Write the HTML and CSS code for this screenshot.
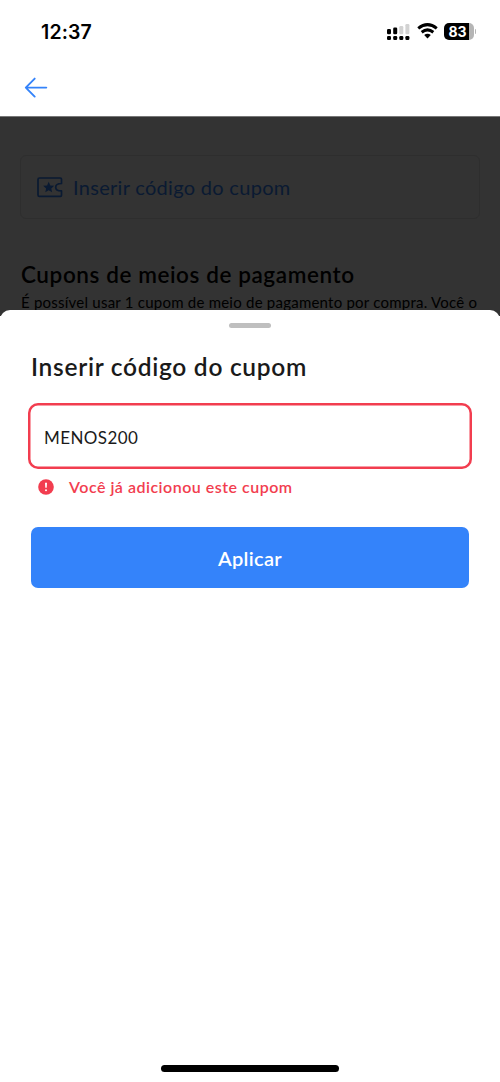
FILE: index.html
```html
<!DOCTYPE html>
<html lang="pt-BR">
<head>
<meta charset="utf-8">
<meta name="viewport" content="width=device-width, initial-scale=1">
<title>Inserir código do cupom</title>
<link rel="stylesheet" href="styles.css">
</head>
<body>
<div class="screen">
  <div class="status-bar">
    <span class="time">12:37</span>
    <div class="status-icons">
      <svg class="signal" viewBox="0 0 23 16">
        <g fill="#000"><rect x="0" y="5" width="4" height="5.2" rx="1.2"/><rect x="6.2" y="3.5" width="4" height="6.7" rx="1.2"/>
        <rect x="0" y="12" width="4" height="4" rx="1.2"/><rect x="6.2" y="12" width="4" height="4" rx="1.2"/><rect x="12.3" y="12" width="4" height="4" rx="1.2"/><rect x="18.4" y="12" width="4" height="4" rx="1.2"/></g>
        <g fill="#d2d2d2"><rect x="12.3" y="2" width="4" height="8.2" rx="1.2"/><rect x="18.4" y="0" width="4" height="10.2" rx="1.2"/></g>
      </svg>
      <svg class="wifi" viewBox="0 0 22 16">
        <g fill="none" stroke="#000" stroke-width="3.1"><path d="M1.3 5.3Q11-2.6 20.7 5.3"/><path d="M4.9 9.300Q11 4.300 17.1 9.300"/></g>
        <path d="M7.500 12.200Q11 9.400 14.500 12.200L11 15.800Z"/>
      </svg>
      <div class="battery"><span class="battery-body">83</span><i class="battery-tip"></i></div>
    </div>
  </div>
  <header class="nav">
    <svg class="back" viewBox="0 0 24 22" fill="none" stroke="#3483fa" stroke-width="1.9" stroke-linecap="round" stroke-linejoin="round"><path d="M22.3 10.600H1.8M10.7 1.600L1.8 10.600l8.9 9"/></svg>
  </header>
  <main class="dimmed">
    <div class="coupon-card">
      <svg class="ticket" viewBox="0 0 26 21">
        <path d="M2.500 1H23.300Q24.500 1 24.500 2.200V6.500C20.200 6.500 18.700 8.500 18.700 10.200S20.200 13.900 24.500 13.900V18.200Q24.500 19.400 23.300 19.400H2.500Q1 19.400 1 17.900V2.500Q1 1 2.500 1Z" fill="none" stroke="#0a1a32" stroke-width="1.700" stroke-linejoin="round"/>
        <path d="M11.7 4.8l1.6 3.6 3.9.4-2.9 2.6.8 3.9-3.4-2-3.4 2 .8-3.9L6.200 8.800l3.900-.4z" fill="#0a1a32"/>
      </svg>
      <span class="coupon-label">Inserir código do cupom</span>
    </div>
    <h2 class="section-title">Cupons de meios de pagamento</h2>
    <p class="section-text">É possível usar 1 cupom de meio de pagamento por compra. Você o</p>
  </main>
  <section class="sheet">
    <div class="handle"></div>
    <h1 class="sheet-title">Inserir código do cupom</h1>
    <div class="field"><span class="field-value">MENOS200</span></div>
    <div class="error">
      <svg class="error-icon" viewBox="0 0 16 16"><circle cx="8" cy="8" r="7.8" fill="#f23d4f"/><path d="M7 3.800h2l-.3 5H7.300z" fill="#fff"/><circle cx="8" cy="11.300" r="1" fill="#fff"/></svg>
      <span class="error-text">Você já adicionou este cupom</span>
    </div>
    <button class="apply" type="button"><span class="apply-label">Aplicar</span></button>
    <div class="home-indicator"></div>
  </section>
</div>
</body>
</html>
```
FILE: styles.css
```css
* { box-sizing: border-box; }
body { margin: 0; background: #fff; font-family: Lato, sans-serif; color: #1a1a1a; }
h1, h2, p { margin: 0; white-space: nowrap; }
svg { display: block; flex: none; overflow: visible; }
.screen { width: 500px; height: 1082px; display: flex; flex-direction: column; overflow: hidden; }
.status-bar { height: 59px; padding: 20px 24px 0 41px; display: flex; justify-content: space-between; align-items: flex-start; }
.time { font: 600 19.500px/24px Inter, sans-serif; letter-spacing: 0.150px; color: #000; }
.status-icons { display: flex; padding-top: 3px; }
.signal { width: 23px; height: 16px; margin: 1px 7px 0 0; }
.wifi { width: 21px; height: 16px; margin-right: 6px; }
.battery { display: flex; align-items: center; height: 17px; gap: 1px; }
.battery-body { width: 30px; height: 17px; padding-right: 2px; border-radius: 5px; background: linear-gradient(90deg, #000 25px, #b5b5b5 25px); color: #fff; font: 700 14px/17px Inter, sans-serif; text-align: center; }
.battery-tip { width: 1.500px; height: 5px; border-radius: 0 2px 2px 0; background: #b5b5b5; }
.nav { height: 57px; padding: 18px 24px; }
.back { width: 24px; height: 22px; }
.dimmed { height: 200px; flex: none; padding: 38px 20px 0; background: #333; color: #000; border-top: 1px solid #777; overflow: hidden; }
.coupon-card { height: 64px; border: 1px solid #2e2e2e; border-radius: 6px; padding: 0 16px; display: flex; align-items: center; gap: 10px; }
.ticket { width: 26px; height: 21px; }
.coupon-label { font-size: 20px; line-height: 24px; letter-spacing: 0.300px; color: #0a1a32; white-space: nowrap; }
.section-title { margin-top: 42px; padding-left: 1px; font-size: 22.500px; line-height: 28px; font-weight: 600; letter-spacing: 0.590px; }
.section-text { margin-top: 3px; padding-left: 1px; font-size: 15px; line-height: 20px; letter-spacing: 0.230px; }
.sheet { position: relative; flex: 1; margin-top: -6px; padding: 13px 31px 10px; border-radius: 10px 10px 0 0; background: #fff; display: flex; flex-direction: column; }
.handle { width: 42px; height: 5px; border-radius: 3px; background: #bfbfbf; align-self: center; }
.sheet-title { margin-top: 24px; font-size: 24.500px; line-height: 30px; font-weight: 600; letter-spacing: 0.710px; }
.field { height: 66px; margin: 21px -3px 0 -3px; padding: 3px 16px 0; box-shadow: inset 0 0 0 2.500px #f23d4f; border-radius: 10px; display: flex; align-items: center; }
.field-value { font-size: 17px; line-height: 20px; letter-spacing: 0.400px; }
.error { margin: 8px 0 0 7px; height: 20px; display: flex; align-items: center; gap: 15px; color: #f23d4f; }
.error-icon { width: 16px; height: 16px; }
.error-text { font-size: 16px; font-weight: 600; line-height: 20px; letter-spacing: 0.500px; white-space: nowrap; }
.apply { margin-top: 30px; height: 61px; border: 0; border-radius: 7px; background: #3483fa; color: #fff; font: 600 20px/24px Lato, sans-serif; letter-spacing: 0.300px; }
.home-indicator { width: 178px; height: 7px; border-radius: 4px; background: #000; align-self: center; margin-top: auto; }
```
